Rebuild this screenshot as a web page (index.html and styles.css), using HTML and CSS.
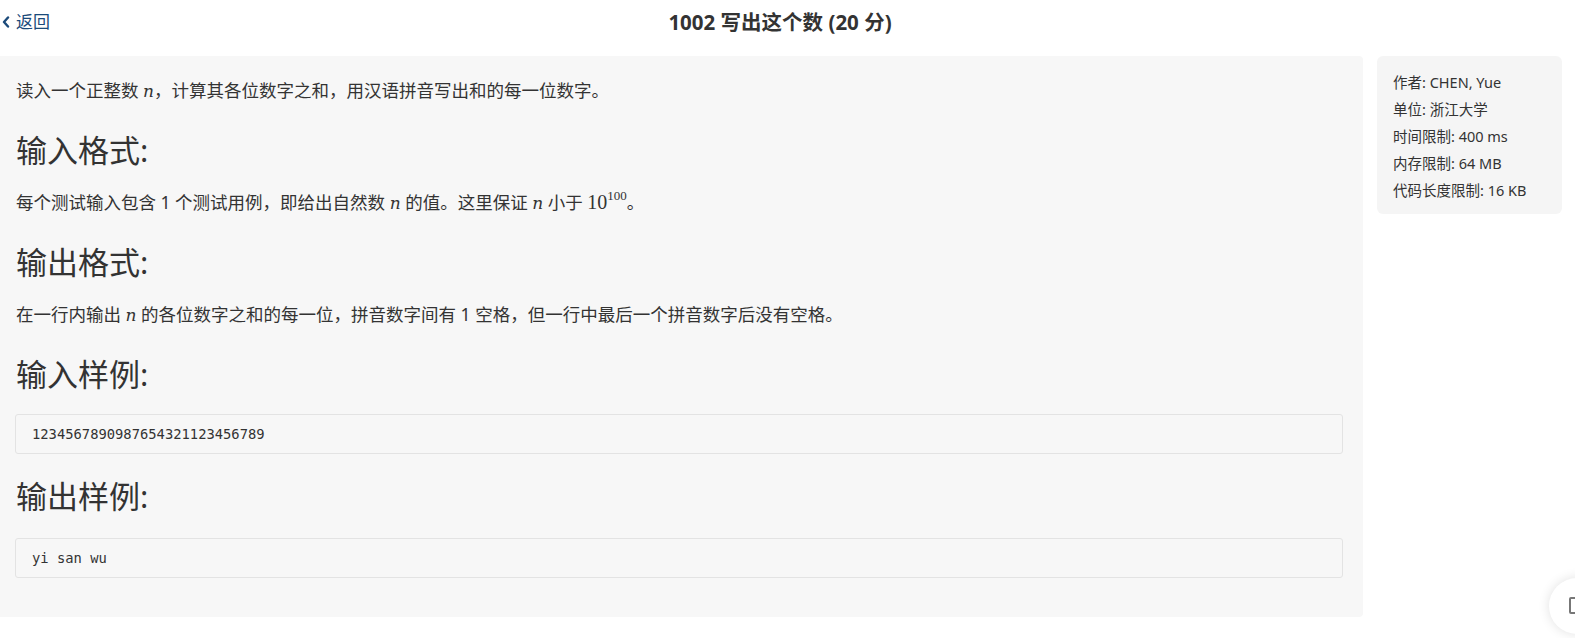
FILE: index.html
```html
<!DOCTYPE html>
<html lang="zh-CN">
<head>
<meta charset="utf-8">
<title>1002 写出这个数</title>
<link rel="stylesheet" href="styles.css">
</head>
<body>
<header class="topbar">
  <a class="back" href="#"><svg class="chev" viewBox="0 0 8 12" width="8" height="12"><path d="M6 1.5 L2 6 L6 10.5" fill="none" stroke="#1b4a7a" stroke-width="2.4" stroke-linecap="round" stroke-linejoin="round"/></svg><span>返回</span></a>
  <h1 class="title">1002 写出这个数 (20 分)</h1>
</header>
<div class="layout">
  <main class="problem">
    <p>读入一个正整数 <i class="m">n</i>，计算其各位数字之和，用汉语拼音写出和的每一位数字。</p>
    <h2>输入格式:</h2>
    <p>每个测试输入包含 1 个测试用例，即给出自然数 <i class="m">n</i> 的值。这里保证 <i class="m">n</i> 小于 <span class="mr">10<sup>100</sup></span>。</p>
    <h2>输出格式:</h2>
    <p>在一行内输出 <i class="m">n</i> 的各位数字之和的每一位，拼音数字间有 1 空格，但一行中最后一个拼音数字后没有空格。</p>
    <h2>输入样例:</h2>
    <pre class="code">1234567890987654321123456789</pre>
    <h2>输出样例:</h2>
    <pre class="code">yi san wu</pre>
  </main>
  <aside class="info">
    <div>作者: CHEN, Yue</div>
    <div>单位: 浙江大学</div>
    <div>时间限制: 400 ms</div>
    <div>内存限制: 64 MB</div>
    <div>代码长度限制: 16 KB</div>
  </aside>
</div>
<div class="fab"><span class="fab-icon"></span></div>
</body>
</html>
```
FILE: styles.css
```css
html, body {
  margin: 0;
  padding: 0;
  background: #ffffff;
}
body {
  font-family: "Noto Sans", "Noto Sans CJK SC", sans-serif;
  color: #333333;
  overflow: hidden;
}
.topbar {
  height: 44px;
  display: flex;
  align-items: center;
  justify-content: center;
  position: relative;
  padding-right: 15px;
}
.back {
  position: absolute;
  left: 2px;
  top: 10px;
  display: flex;
  align-items: center;
  gap: 6px;
  color: #1b4a7a;
  text-decoration: none;
  font-size: 17px;
  line-height: 24px;
}
.chev {
  display: block;
}
.title {
  margin: 0;
  font-size: 20.5px;
  font-weight: 700;
  color: #333;
  line-height: 24px;
}
.layout {
  display: flex;
  align-items: flex-start;
  gap: 14px;
  margin-top: 12px;
}
.problem {
  width: 1363px;
  box-sizing: border-box;
  background: #f7f7f7;
  padding: 21px 20px 39px 15px;
  border-radius: 0 4px 4px 0;
}
.problem p {
  margin: 0;
  font-size: 17.5px;
  line-height: 26px;
  padding-left: 1px;
}
.problem h2 {
  margin: 27px 0 19px;
  font-size: 31px;
  font-weight: 400;
  line-height: 40px;
  padding-left: 1px;
}
.m {
  font-family: "DejaVu Serif", "Liberation Serif", serif;
  font-style: italic;
  font-size: 17px;
  line-height: 0;
}
.mr {
  font-family: "Liberation Serif", serif;
  font-size: 20px;
  line-height: 0;
}
.mr sup {
  font-size: 13px;
  vertical-align: 9px;
  line-height: 0;
}
.code {
  margin: 20px 0 0;
  background: #f7f7f7;
  border: 1px solid #e3e3e3;
  border-radius: 3px;
  padding: 10px 16px;
  font-family: "DejaVu Sans Mono", monospace;
  font-size: 13.8px;
  line-height: 18px;
  color: #333;
}
.code + h2 {
  margin-top: 22px;
  margin-bottom: 0;
}
.code + h2 + .code {
  margin-top: 22px;
}
.info {
  width: 185px;
  box-sizing: border-box;
  background: #f5f5f5;
  border-radius: 6px;
  padding: 13px 8px 10px 16px;
  font-size: 14.5px;
  line-height: 27px;
  color: #333;
}
.fab {
  position: fixed;
  left: 1549px;
  top: 578px;
  width: 56px;
  height: 56px;
  border-radius: 50%;
  background: #fff;
  box-shadow: 0 0 12px rgba(0,0,0,0.12);
}
.fab-icon {
  position: absolute;
  left: 20px;
  top: 19px;
  width: 14px;
  height: 17px;
  border: 2px solid #777;
  border-radius: 2px;
  box-sizing: border-box;
}
```
